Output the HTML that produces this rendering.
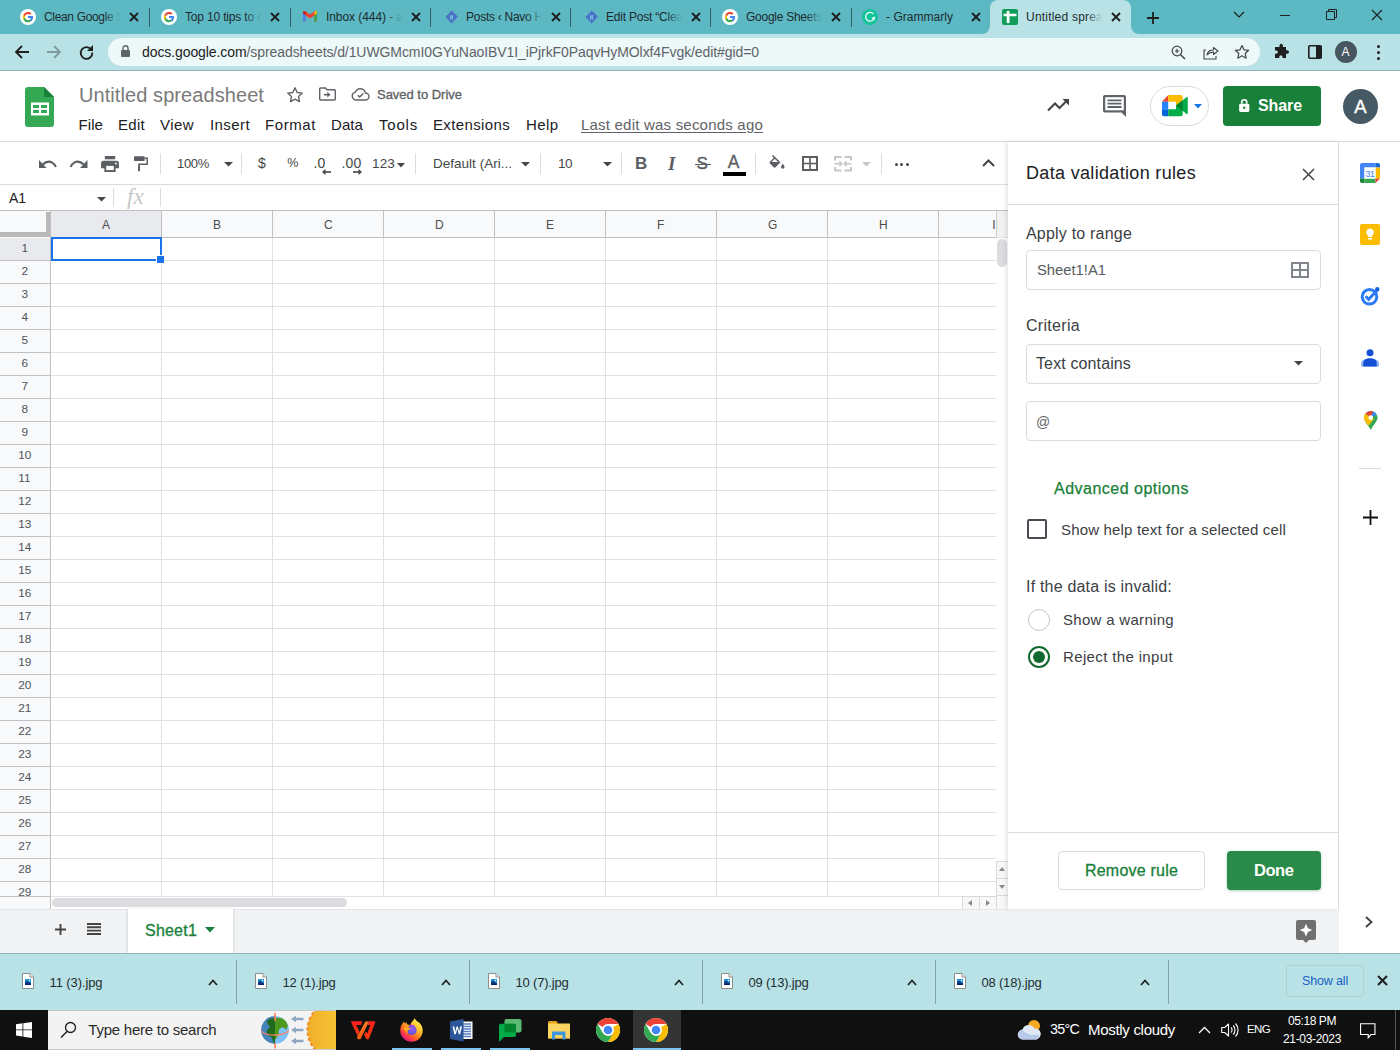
<!DOCTYPE html>
<html lang="en"><head><meta charset="utf-8"><title>Untitled spreadsheet - Google Sheets</title>
<style>
html,body{margin:0;padding:0;}
body{width:1400px;height:1050px;overflow:hidden;position:relative;background:#fff;font-family:"Liberation Sans",sans-serif;}
.a{position:absolute;}
.t{position:absolute;white-space:nowrap;font-family:"Liberation Sans",sans-serif;}
svg{position:absolute;overflow:visible;}
.box{position:absolute;box-sizing:border-box;}
</style></head><body>
<div class="a" style="left:0;top:0;width:1400px;height:34px;background:#5cb8c3"></div>
<div class="a" style="left:0;top:34px;width:1400px;height:36px;background:#b9e2e6"></div>
<div class="a" style="left:0;top:70px;width:1400px;height:1px;background:#8fb5ba"></div>
<div class="a" style="left:990px;top:0;width:141px;height:34px;background:#b9e2e6;border-radius:8px 8px 0 0"></div>
<svg style="left:982px;top:26px" width="8" height="8"><path d="M8 0V8H0A8 8 0 0 0 8 0Z" fill="#b9e2e6"/></svg>
<svg style="left:1131px;top:26px" width="8" height="8"><path d="M0 0V8H8A8 8 0 0 1 0 0Z" fill="#b9e2e6"/></svg>
<div class="a" style="left:149px;top:8px;width:1px;height:19px;background:#2f5f66"></div>
<div class="a" style="left:290px;top:8px;width:1px;height:19px;background:#2f5f66"></div>
<div class="a" style="left:430px;top:8px;width:1px;height:19px;background:#2f5f66"></div>
<div class="a" style="left:570px;top:8px;width:1px;height:19px;background:#2f5f66"></div>
<div class="a" style="left:710px;top:8px;width:1px;height:19px;background:#2f5f66"></div>
<div class="a" style="left:851px;top:8px;width:1px;height:19px;background:#2f5f66"></div>
<svg style="left:20px;top:9px" width="16" height="16" viewBox="0 0 16 16"><circle cx="8" cy="8" r="8" fill="#fff"/><path d="M13 8.1c0-.35-.03-.7-.1-1H8v2h2.8a2.4 2.4 0 0 1-1 1.6v1.3h1.7C12.4 11.1 13 9.7 13 8.1z" fill="#4285f4"/><path d="M8 13.2c1.4 0 2.6-.5 3.4-1.2l-1.7-1.3c-.5.3-1 .5-1.7.5-1.300 0-2.500-.9-2.900-2.100H3.400v1.300A5.200 5.200 0 0 0 8 13.200z" fill="#34a853"/><path d="M5.100 9.100a3.100 3.100 0 0 1 0-2V5.800H3.400a5.200 5.200 0 0 0 0 4.600z" fill="#fbbc05"/><path d="M8 4.900c.8 0 1.400.3 2 .8l1.500-1.500A5.200 5.200 0 0 0 3.400 5.800l1.700 1.300C5.500 5.800 6.700 4.900 8 4.900z" fill="#ea4335"/></svg>
<svg style="left:129.5px;top:13px" width="8" height="8"><path d="M0 0L8 8M8 0L0 8" stroke="#1f1f1f" stroke-width="1.9" fill="none"/></svg>
<div class="a" style="left:104px;top:6px;width:22px;height:22px;background:linear-gradient(90deg,rgba(92,184,195,0),rgba(92,184,195,1) 75%);z-index:5"></div>
<svg style="left:161px;top:9px" width="16" height="16" viewBox="0 0 16 16"><circle cx="8" cy="8" r="8" fill="#fff"/><path d="M13 8.1c0-.35-.03-.7-.1-1H8v2h2.8a2.4 2.4 0 0 1-1 1.6v1.3h1.7C12.4 11.1 13 9.7 13 8.1z" fill="#4285f4"/><path d="M8 13.2c1.4 0 2.6-.5 3.4-1.2l-1.7-1.3c-.5.3-1 .5-1.7.5-1.300 0-2.500-.9-2.900-2.100H3.400v1.300A5.200 5.200 0 0 0 8 13.200z" fill="#34a853"/><path d="M5.100 9.100a3.100 3.100 0 0 1 0-2V5.800H3.400a5.200 5.200 0 0 0 0 4.600z" fill="#fbbc05"/><path d="M8 4.900c.8 0 1.400.3 2 .8l1.500-1.500A5.200 5.200 0 0 0 3.400 5.800l1.700 1.300C5.500 5.800 6.700 4.900 8 4.900z" fill="#ea4335"/></svg>
<svg style="left:270.5px;top:13px" width="8" height="8"><path d="M0 0L8 8M8 0L0 8" stroke="#1f1f1f" stroke-width="1.9" fill="none"/></svg>
<div class="a" style="left:245px;top:6px;width:22px;height:22px;background:linear-gradient(90deg,rgba(92,184,195,0),rgba(92,184,195,1) 75%);z-index:5"></div>
<svg style="left:303px;top:11.400px" width="14" height="10.600" viewBox="0 0 16 12"><path d="M0 1.500V12h3V5L8 8.500 13 5v7h3V1.500L13.500 0 8 4 2.500 0z" fill="#ea4335"/><path d="M0 2v10h3V4.500z" fill="#4285f4"/><path d="M16 2v10h-3V4.500z" fill="#34a853"/><path d="M13 1v4l3-2.200V1.500C16 .2 14.600-.3 13.600.4z" fill="#fbbc04"/><path d="M3 1v4L0 2.800V1.500C0 .2 1.400-.3 2.400.4z" fill="#c5221f"/></svg>
<svg style="left:411.5px;top:13px" width="8" height="8"><path d="M0 0L8 8M8 0L0 8" stroke="#1f1f1f" stroke-width="1.9" fill="none"/></svg>
<div class="a" style="left:386px;top:6px;width:22px;height:22px;background:linear-gradient(90deg,rgba(92,184,195,0),rgba(92,184,195,1) 75%);z-index:5"></div>
<svg style="left:443px;top:9px" width="16" height="16" viewBox="0 0 16 16"><path d="M8.700 2.300L14 7.600 8.700 13.600 3.400 8z" fill="#4b70c9" stroke="#4b70c9" stroke-width="1.200" stroke-linejoin="round"/><path d="M7.600 10.800V6.300l2 4.200V6" stroke="#74c4d2" stroke-width="1" fill="none"/><circle cx="2.500" cy="5" r="1.300" fill="#7cc8d6" opacity=".45"/></svg>
<svg style="left:551.5px;top:13px" width="8" height="8"><path d="M0 0L8 8M8 0L0 8" stroke="#1f1f1f" stroke-width="1.9" fill="none"/></svg>
<div class="a" style="left:526px;top:6px;width:22px;height:22px;background:linear-gradient(90deg,rgba(92,184,195,0),rgba(92,184,195,1) 75%);z-index:5"></div>
<svg style="left:583px;top:9px" width="16" height="16" viewBox="0 0 16 16"><path d="M8.700 2.300L14 7.600 8.700 13.600 3.400 8z" fill="#4b70c9" stroke="#4b70c9" stroke-width="1.200" stroke-linejoin="round"/><path d="M7.600 10.800V6.300l2 4.200V6" stroke="#74c4d2" stroke-width="1" fill="none"/><circle cx="2.500" cy="5" r="1.300" fill="#7cc8d6" opacity=".45"/></svg>
<svg style="left:691.5px;top:13px" width="8" height="8"><path d="M0 0L8 8M8 0L0 8" stroke="#1f1f1f" stroke-width="1.9" fill="none"/></svg>
<div class="a" style="left:666px;top:6px;width:22px;height:22px;background:linear-gradient(90deg,rgba(92,184,195,0),rgba(92,184,195,1) 75%);z-index:5"></div>
<svg style="left:722px;top:9px" width="16" height="16" viewBox="0 0 16 16"><circle cx="8" cy="8" r="8" fill="#fff"/><path d="M13 8.1c0-.35-.03-.7-.1-1H8v2h2.8a2.4 2.4 0 0 1-1 1.6v1.3h1.7C12.4 11.1 13 9.7 13 8.1z" fill="#4285f4"/><path d="M8 13.2c1.4 0 2.6-.5 3.4-1.2l-1.7-1.3c-.5.3-1 .5-1.7.5-1.300 0-2.500-.9-2.900-2.100H3.400v1.300A5.200 5.200 0 0 0 8 13.200z" fill="#34a853"/><path d="M5.100 9.100a3.100 3.100 0 0 1 0-2V5.800H3.400a5.200 5.200 0 0 0 0 4.600z" fill="#fbbc05"/><path d="M8 4.900c.8 0 1.400.3 2 .8l1.500-1.500A5.200 5.200 0 0 0 3.400 5.800l1.700 1.300C5.500 5.800 6.700 4.900 8 4.900z" fill="#ea4335"/></svg>
<svg style="left:831.5px;top:13px" width="8" height="8"><path d="M0 0L8 8M8 0L0 8" stroke="#1f1f1f" stroke-width="1.9" fill="none"/></svg>
<div class="a" style="left:806px;top:6px;width:22px;height:22px;background:linear-gradient(90deg,rgba(92,184,195,0),rgba(92,184,195,1) 75%);z-index:5"></div>
<svg style="left:862px;top:9px" width="16" height="16" viewBox="0 0 16 16"><circle cx="8" cy="8" r="8" fill="#15c39a"/><path d="M11.300 4.800A4.400 4.400 0 1 0 12.300 9H9.800" stroke="#fff" stroke-width="1.200" fill="none"/><path d="M12.800 7.300v3.400l-2.600-1.200z" fill="#fff"/></svg>
<svg style="left:971.5px;top:13px" width="8" height="8"><path d="M0 0L8 8M8 0L0 8" stroke="#1f1f1f" stroke-width="1.9" fill="none"/></svg>
<svg style="left:1002px;top:9px" width="16" height="16" viewBox="0 0 16 16"><rect width="16" height="16" rx="2" fill="#0f9d58"/><path d="M4.700 2h2.800v2.700h7v2.600h-7V14H4.700V7.300H1.500V4.700h3.200z" fill="#fff"/></svg>
<svg style="left:1111.5px;top:13px" width="8" height="8"><path d="M0 0L8 8M8 0L0 8" stroke="#1f1f1f" stroke-width="1.9" fill="none"/></svg>
<div class="a" style="left:1086px;top:6px;width:22px;height:22px;background:linear-gradient(90deg,rgba(185,226,230,0),rgba(185,226,230,1) 75%);z-index:5"></div>
<svg style="left:1147px;top:11.500px" width="12" height="12"><path d="M6 0V12M0 6H12" stroke="#1f1f1f" stroke-width="1.800"/></svg>
<svg style="left:1233px;top:11px" width="12" height="8"><path d="M1 1L6 6 11 1" stroke="#1f1f1f" stroke-width="1.200" fill="none"/></svg>
<div class="a" style="left:1280px;top:14.500px;width:10px;height:1px;background:#1f1f1f"></div>
<svg style="left:1326px;top:9px" width="11" height="11"><path d="M.500 2.500h8v8h-8zM2.500 2.500v-2h8v8h-2" stroke="#1f1f1f" stroke-width="1" fill="none"/></svg>
<svg style="left:1372px;top:10px" width="10" height="10"><path d="M0 0L10 10M10 0L0 10" stroke="#1f1f1f" stroke-width="1.1" fill="none"/></svg>
<svg style="left:15px;top:45px" width="14" height="14"><path d="M14 7H1.500M7 1L1 7l6 6" stroke="#1f1f1f" stroke-width="1.800" fill="none"/></svg>
<svg style="left:47px;top:45px" width="14" height="14"><path d="M0 7h12.500M7 1l6 6-6 6" stroke="#7e9a9e" stroke-width="1.800" fill="none"/></svg>
<svg style="left:79px;top:45px" width="15" height="15" viewBox="0 0 15 15"><path d="M12.500 5A5.800 5.800 0 1 0 13.300 7.500" stroke="#1f1f1f" stroke-width="1.800" fill="none"/><path d="M14 0v6H8z" fill="#1f1f1f"/></svg>
<div class="a" style="left:108px;top:38px;width:1152px;height:28px;border-radius:14px;background:#edf8f9"></div>
<svg style="left:121px;top:45px" width="9" height="12" viewBox="0 0 9 12"><rect x="0" y="5" width="9" height="7" rx="1" fill="#5f6368"/><path d="M2 5V3.200a2.500 2.500 0 0 1 5 0V5" stroke="#5f6368" stroke-width="1.400" fill="none"/></svg>
<svg style="left:1171px;top:45px" width="15" height="15" viewBox="0 0 15 15"><circle cx="6" cy="6" r="4.800" stroke="#444" stroke-width="1.200" fill="none"/><path d="M9.500 9.500L14 14" stroke="#444" stroke-width="1.500"/><path d="M6 3.800v4.400M3.800 6h4.400" stroke="#444" stroke-width="1.100"/></svg>
<svg style="left:1202.500px;top:44.500px" width="16" height="15" viewBox="0 0 16 15"><path d="M3 5H1v9h12v-3" stroke="#444" stroke-width="1.100" fill="none"/><path d="M4 10c.500-3.500 3-5 6.500-5V2.500L15 6l-4.500 3.500V7C8 7 6 7.800 4 10z" stroke="#444" stroke-width="1.100" fill="none" stroke-linejoin="round"/></svg>
<svg style="left:1234px;top:44px" width="16" height="16" viewBox="0 0 16 16"><path d="M8 1.500l2 4.300 4.700.5-3.500 3.200 1 4.700L8 11.800 3.800 14.200l1-4.700L1.300 6.300 6 5.800z" stroke="#444" stroke-width="1.200" fill="none" stroke-linejoin="round"/></svg>
<svg style="left:1273px;top:44px" width="16" height="16" viewBox="0 0 16 16"><path d="M6.500 1.500a1.700 1.700 0 0 1 3.400 0V3H13v3.300h1.300a1.700 1.700 0 0 1 0 3.400H13V14H9.500v-1.200a1.600 1.600 0 0 0-3.200 0V14H2V9.800h1.200a1.700 1.700 0 0 0 0-3.400H2V3h4.500z" fill="#1f1f1f"/></svg>
<svg style="left:1307.500px;top:45px" width="14" height="14" viewBox="0 0 14 14"><rect x=".8" y=".8" width="12.400" height="12.400" rx="1" stroke="#1f1f1f" stroke-width="1.600" fill="none"/><rect x="8" y="1" width="5.500" height="12" fill="#1f1f1f"/></svg>
<div class="a" style="left:1335px;top:41px;width:22px;height:22px;border-radius:11px;background:#47565f"></div>
<div class="a" style="left:1376.500px;top:44.5px;width:3px;height:3px;border-radius:2px;background:#1f1f1f"></div>
<div class="a" style="left:1376.500px;top:50.5px;width:3px;height:3px;border-radius:2px;background:#1f1f1f"></div>
<div class="a" style="left:1376.500px;top:56.5px;width:3px;height:3px;border-radius:2px;background:#1f1f1f"></div>
<svg style="left:25px;top:87px" width="29" height="40" viewBox="0 0 29 40"><path d="M3 0h16l10 10v27a3 3 0 0 1-3 3H3a3 3 0 0 1-3-3V3a3 3 0 0 1 3-3z" fill="#34a853"/><path d="M19 0l10 10H19z" fill="#188038"/><path d="M6 15.500h18v13H6zM8 18v3h6v-3zm8 0v3h6v-3zM8 23v3h6v-3zm8 0v3h6v-3z" fill="#fff" fill-rule="evenodd"/></svg>
<svg style="left:285.700px;top:85.600px" width="18" height="18" viewBox="0 0 18 18"><path d="M9 1.800l2.200 4.700 5.100.6-3.800 3.500 1 5L9 13.100 4.500 15.600l1-5L1.700 7.100l5.100-.6z" stroke="#5f6368" stroke-width="1.400" fill="none" stroke-linejoin="round"/></svg>
<svg style="left:319px;top:87px" width="17" height="14" viewBox="0 0 17 14"><path d="M1.500 1h5l1.500 1.800h7.500a.8.8 0 0 1 .8.800v8.600a.8.800 0 0 1-.8.800h-14a.8.800 0 0 1-.8-.8V1.800a.8.800 0 0 1 .8-.8z" stroke="#5f6368" stroke-width="1.400" fill="none"/><path d="M5 7.700h4" stroke="#5f6368" stroke-width="1.600" fill="none"/><path d="M8.300 4.800l3.200 2.900-3.200 2.900z" fill="#5f6368"/></svg>
<svg style="left:351px;top:87px" width="19" height="14" viewBox="0 0 19 14"><path d="M5 13a4 4 0 0 1-.6-7.900 5.200 5.200 0 0 1 10 .9A3.500 3.500 0 0 1 14.500 13z" stroke="#5f6368" stroke-width="1.400" fill="none"/><path d="M6.800 8.200l1.900 1.900 3.600-3.600" stroke="#5f6368" stroke-width="1.400" fill="none"/></svg>
<svg style="left:1047px;top:98px" width="23" height="14" viewBox="0 0 23 14"><path d="M1 12.500l7-7 4.500 4.500L20.500 2" stroke="#444" stroke-width="2" fill="none"/><path d="M15.500 1H22v6.500z" fill="#444"/></svg>
<svg style="left:1103px;top:95px" width="23" height="22" viewBox="0 0 23 22"><path d="M2 0h19a2 2 0 0 1 2 2v20l-4.500-4.500H2a2 2 0 0 1-2-2V2a2 2 0 0 1 2-2z" fill="#5f6368"/><path d="M2.200 2.200h18.600v13.100H2.200z" fill="#fff"/><path d="M4.500 4.500h14v1.800h-14zM4.500 7.800h14v1.800h-14zM4.500 11.100h14v1.800h-14z" fill="#5f6368"/></svg>
<div class="box" style="left:1150px;top:86px;width:59px;height:39.500px;border-radius:20px;border:1px solid #dadce0;background:#fff"></div>
<svg style="left:1162px;top:95px" width="26" height="21.250" viewBox="0 0 26 21.250"><path d="M0 6.750L6.250 0v6.750z" fill="#ea4335"/><path d="M6.250 0H18.700a2 2 0 0 1 2 2v4L14 10.500V6.750H6.250z" fill="#fbbc04"/><path d="M0 6.750h6.250v7.500H0z" fill="#2684fc"/><path d="M0 14.250h6.250v7H2a2 2 0 0 1-2-2z" fill="#0066da"/><path d="M6.250 14.250H14V10.500l6.700 5v3.750a2 2 0 0 1-2 2H6.250z" fill="#00ac47"/><path d="M14 10.500l10.500-8.300c.5-.4 1.250 0 1.250.6v15.600c0 .6-.75 1-1.250.6z" fill="#00ac47"/><path d="M14 10.500l6.700-5.300v10.500z" fill="#00832d"/></svg>
<svg style="left:1194px;top:104px" width="8" height="4.500"><path d="M0 0h8L4 4.500z" fill="#1a73e8"/></svg>
<div class="a" style="left:1223px;top:86px;width:98px;height:40px;border-radius:4px;background:#188038"></div>
<svg style="left:1238.500px;top:98.700px" width="10.500" height="13" viewBox="0 0 11 14"><rect x="0" y="5" width="11" height="9" rx="1.500" fill="#fff"/><path d="M2.800 5V3.500a2.700 2.700 0 0 1 5.400 0V5" stroke="#fff" stroke-width="1.700" fill="none"/><circle cx="5.500" cy="9.500" r="1.300" fill="#188038"/></svg>
<div class="a" style="left:1343px;top:88.500px;width:35px;height:35px;border-radius:18px;background:#455a64"></div>
<div class="a" style="left:0;top:141px;width:1400px;height:1px;background:#dadce0"></div>
<svg style="left:39px;top:159.600px" width="17.500" height="8" viewBox="0 0 17.500 8"><path d="M0 0V8H7.500z" fill="#5b5e62"/><path d="M3.800 4.600C6.500 1.800 10.300 1 13.200 2.600c1.800 1 3 2.600 3.600 4.400" stroke="#5b5e62" stroke-width="2.100" fill="none"/></svg>
<svg style="left:69.800px;top:159.600px" width="17.500" height="8" viewBox="0 0 17.500 8"><path d="M17.500 0V8H10z" fill="#5b5e62"/><path d="M13.700 4.600C11 1.800 7.200 1 4.300 2.600 2.500 3.600 1.300 5.200 .7 7" stroke="#5b5e62" stroke-width="2.100" fill="none"/></svg>
<svg style="left:101px;top:156px" width="18" height="16" viewBox="0 0 19 17"><path d="M4 0h11v3.500H4z" fill="#5b5e62"/><path d="M2.500 5h14A2.500 2.500 0 0 1 19 7.500V13h-3.500v4h-12v-4H0V7.500A2.500 2.500 0 0 1 2.500 5z" fill="#5b5e62"/><path d="M5.500 10.500h8V15h-8z" fill="#fff"/><circle cx="15.800" cy="8" r="1" fill="#fff"/></svg>
<svg style="left:134px;top:156px" width="14" height="15.500" viewBox="0 0 14 15.500"><rect x="0" y=".2" width="10.700" height="4.800" rx=".7" fill="#5b5e62"/><path d="M10.700 2.200H13.200V8.200H5V10" stroke="#5b5e62" stroke-width="1.500" fill="none"/><rect x="4.100" y="9.300" width="1.900" height="6" fill="#5b5e62"/></svg>
<div class="a" style="left:160px;top:153px;width:1px;height:21px;background:#dadce0"></div>
<div class="a" style="left:241px;top:153px;width:1px;height:21px;background:#dadce0"></div>
<div class="a" style="left:415px;top:153px;width:1px;height:21px;background:#dadce0"></div>
<div class="a" style="left:540px;top:153px;width:1px;height:21px;background:#dadce0"></div>
<div class="a" style="left:621px;top:153px;width:1px;height:21px;background:#dadce0"></div>
<div class="a" style="left:755px;top:153px;width:1px;height:21px;background:#dadce0"></div>
<div class="a" style="left:881px;top:153px;width:1px;height:21px;background:#dadce0"></div>
<svg style="left:223.5px;top:162px" width="9" height="5"><path d="M0 0h9L4.5 4.500z" fill="#444746"/></svg>
<svg style="left:322px;top:168.500px" width="9" height="6"><path d="M9 3H2" stroke="#444746" stroke-width="1.600"/><path d="M0 3l3.500-3v6z" fill="#444746"/></svg>
<svg style="left:353px;top:168.500px" width="9" height="6"><path d="M0 3h7" stroke="#444746" stroke-width="1.600"/><path d="M9 3l-3.500-3v6z" fill="#444746"/></svg>
<svg style="left:397.0px;top:162.5px" width="8" height="5"><path d="M0 0h8L4.0 4.500z" fill="#444746"/></svg>
<svg style="left:520.5px;top:162px" width="9" height="5"><path d="M0 0h9L4.5 4.500z" fill="#444746"/></svg>
<svg style="left:602.5px;top:162px" width="9" height="5"><path d="M0 0h9L4.5 4.500z" fill="#444746"/></svg>
<div class="a" style="left:695px;top:163.500px;width:16px;height:1.600px;background:#5b5e62"></div>
<div class="a" style="left:723px;top:172px;width:23px;height:4px;background:#000"></div>
<svg style="left:768.500px;top:155px" width="17" height="15" viewBox="0 0 19 17"><path d="M3.200 1.200L4.500 0l8.300 8.300-5.500 5.500a1.500 1.500 0 0 1-2.100 0L1 9.600a1.500 1.500 0 0 1 0-2.100l4.300-4.300zM6.300 4.300L2.700 8h7.400z" fill="#5b5e62" fill-rule="evenodd"/><path d="M15.500 10s2 2.300 2 3.500a2 2 0 0 1-4 0c0-1.200 2-3.500 2-3.500z" fill="#5b5e62"/></svg>
<svg style="left:802px;top:156px" width="16" height="15" viewBox="0 0 16 15"><path d="M1 1h14v13H1z" stroke="#5b5e62" stroke-width="2" fill="none"/><path d="M8 1v13M1 7.500h14" stroke="#5b5e62" stroke-width="1.600" fill="none"/></svg>
<svg style="left:834px;top:156.300px" width="18" height="15.500" viewBox="0 0 18 15.500"><path d="M1 4.500V1H7.500M10.500 1H17V4.500M1 11v3.500H7.500M10.500 14.500H17V11" stroke="#c4c7c5" stroke-width="2" fill="none"/><path d="M.5 7.750H6.500M17.500 7.750H11.500" stroke="#c4c7c5" stroke-width="1.700"/><path d="M5.300 5.400l2.500 2.350-2.500 2.350M12.700 5.400l-2.500 2.350 2.500 2.350" stroke="#c4c7c5" stroke-width="1.500" fill="none"/></svg>
<svg style="left:862.3px;top:162.3px" width="9" height="5"><path d="M0 0h9L4.5 4.500z" fill="#c4c7c5"/></svg>
<div class="a" style="left:894.7px;top:162.500px;width:3px;height:3px;border-radius:2px;background:#444746"></div>
<div class="a" style="left:900.2px;top:162.500px;width:3px;height:3px;border-radius:2px;background:#444746"></div>
<div class="a" style="left:905.7px;top:162.500px;width:3px;height:3px;border-radius:2px;background:#444746"></div>
<svg style="left:982px;top:159px" width="13" height="8"><path d="M1 7l5.500-5.500L12 7" stroke="#444746" stroke-width="2" fill="none"/></svg>
<div class="a" style="left:0;top:184px;width:1008px;height:1px;background:#dadce0"></div>
<svg style="left:96.5px;top:197px" width="9" height="5"><path d="M0 0h9L4.5 4.500z" fill="#444746"/></svg>
<div class="a" style="left:113px;top:188px;width:1px;height:19px;background:#dadce0"></div>
<div class="a" style="left:160px;top:188px;width:1px;height:19px;background:#dadce0"></div>
<div class="a" style="left:0;top:210px;width:1008px;height:1px;background:#c0c0c0"></div>
<div class="a" style="left:0;top:211px;width:996px;height:26px;background:#f8f9fa"></div>
<div class="a" style="left:0;top:237px;width:50px;height:660px;background:#f8f9fa"></div>
<div class="a" style="left:51px;top:211px;width:110px;height:26px;background:#e8eaed"></div>
<div class="a" style="left:0;top:238px;width:50px;height:22px;background:#e8eaed"></div>
<div class="a" style="left:46px;top:212px;width:5px;height:25px;background:#b9b9b9"></div>
<div class="a" style="left:0;top:232px;width:51px;height:5px;background:#b9b9b9"></div>
<div class="a" style="left:50px;top:211px;width:1px;height:26px;background:#c0c0c0"></div>
<div class="a" style="left:50px;top:237px;width:1px;height:660px;background:#c0c0c0"></div>
<div class="a" style="left:161px;top:211px;width:1px;height:26px;background:#c0c0c0"></div>
<div class="a" style="left:161px;top:237px;width:1px;height:660px;background:#e1e1e1"></div>
<div class="a" style="left:272px;top:211px;width:1px;height:26px;background:#c0c0c0"></div>
<div class="a" style="left:272px;top:237px;width:1px;height:660px;background:#e1e1e1"></div>
<div class="a" style="left:383px;top:211px;width:1px;height:26px;background:#c0c0c0"></div>
<div class="a" style="left:383px;top:237px;width:1px;height:660px;background:#e1e1e1"></div>
<div class="a" style="left:494px;top:211px;width:1px;height:26px;background:#c0c0c0"></div>
<div class="a" style="left:494px;top:237px;width:1px;height:660px;background:#e1e1e1"></div>
<div class="a" style="left:605px;top:211px;width:1px;height:26px;background:#c0c0c0"></div>
<div class="a" style="left:605px;top:237px;width:1px;height:660px;background:#e1e1e1"></div>
<div class="a" style="left:716px;top:211px;width:1px;height:26px;background:#c0c0c0"></div>
<div class="a" style="left:716px;top:237px;width:1px;height:660px;background:#e1e1e1"></div>
<div class="a" style="left:827px;top:211px;width:1px;height:26px;background:#c0c0c0"></div>
<div class="a" style="left:827px;top:237px;width:1px;height:660px;background:#e1e1e1"></div>
<div class="a" style="left:938px;top:211px;width:1px;height:26px;background:#c0c0c0"></div>
<div class="a" style="left:938px;top:237px;width:1px;height:660px;background:#e1e1e1"></div>
<div class="a" style="left:51px;top:237px;width:945px;height:1px;background:#c0c0c0"></div>
<div class="a" style="left:0;top:260px;width:50px;height:1px;background:#c0c0c0"></div>
<div class="a" style="left:51px;top:260px;width:945px;height:1px;background:#e1e1e1"></div>
<div class="a" style="left:0;top:283px;width:50px;height:1px;background:#c0c0c0"></div>
<div class="a" style="left:51px;top:283px;width:945px;height:1px;background:#e1e1e1"></div>
<div class="a" style="left:0;top:306px;width:50px;height:1px;background:#c0c0c0"></div>
<div class="a" style="left:51px;top:306px;width:945px;height:1px;background:#e1e1e1"></div>
<div class="a" style="left:0;top:329px;width:50px;height:1px;background:#c0c0c0"></div>
<div class="a" style="left:51px;top:329px;width:945px;height:1px;background:#e1e1e1"></div>
<div class="a" style="left:0;top:352px;width:50px;height:1px;background:#c0c0c0"></div>
<div class="a" style="left:51px;top:352px;width:945px;height:1px;background:#e1e1e1"></div>
<div class="a" style="left:0;top:375px;width:50px;height:1px;background:#c0c0c0"></div>
<div class="a" style="left:51px;top:375px;width:945px;height:1px;background:#e1e1e1"></div>
<div class="a" style="left:0;top:398px;width:50px;height:1px;background:#c0c0c0"></div>
<div class="a" style="left:51px;top:398px;width:945px;height:1px;background:#e1e1e1"></div>
<div class="a" style="left:0;top:421px;width:50px;height:1px;background:#c0c0c0"></div>
<div class="a" style="left:51px;top:421px;width:945px;height:1px;background:#e1e1e1"></div>
<div class="a" style="left:0;top:444px;width:50px;height:1px;background:#c0c0c0"></div>
<div class="a" style="left:51px;top:444px;width:945px;height:1px;background:#e1e1e1"></div>
<div class="a" style="left:0;top:467px;width:50px;height:1px;background:#c0c0c0"></div>
<div class="a" style="left:51px;top:467px;width:945px;height:1px;background:#e1e1e1"></div>
<div class="a" style="left:0;top:490px;width:50px;height:1px;background:#c0c0c0"></div>
<div class="a" style="left:51px;top:490px;width:945px;height:1px;background:#e1e1e1"></div>
<div class="a" style="left:0;top:513px;width:50px;height:1px;background:#c0c0c0"></div>
<div class="a" style="left:51px;top:513px;width:945px;height:1px;background:#e1e1e1"></div>
<div class="a" style="left:0;top:536px;width:50px;height:1px;background:#c0c0c0"></div>
<div class="a" style="left:51px;top:536px;width:945px;height:1px;background:#e1e1e1"></div>
<div class="a" style="left:0;top:559px;width:50px;height:1px;background:#c0c0c0"></div>
<div class="a" style="left:51px;top:559px;width:945px;height:1px;background:#e1e1e1"></div>
<div class="a" style="left:0;top:582px;width:50px;height:1px;background:#c0c0c0"></div>
<div class="a" style="left:51px;top:582px;width:945px;height:1px;background:#e1e1e1"></div>
<div class="a" style="left:0;top:605px;width:50px;height:1px;background:#c0c0c0"></div>
<div class="a" style="left:51px;top:605px;width:945px;height:1px;background:#e1e1e1"></div>
<div class="a" style="left:0;top:628px;width:50px;height:1px;background:#c0c0c0"></div>
<div class="a" style="left:51px;top:628px;width:945px;height:1px;background:#e1e1e1"></div>
<div class="a" style="left:0;top:651px;width:50px;height:1px;background:#c0c0c0"></div>
<div class="a" style="left:51px;top:651px;width:945px;height:1px;background:#e1e1e1"></div>
<div class="a" style="left:0;top:674px;width:50px;height:1px;background:#c0c0c0"></div>
<div class="a" style="left:51px;top:674px;width:945px;height:1px;background:#e1e1e1"></div>
<div class="a" style="left:0;top:697px;width:50px;height:1px;background:#c0c0c0"></div>
<div class="a" style="left:51px;top:697px;width:945px;height:1px;background:#e1e1e1"></div>
<div class="a" style="left:0;top:720px;width:50px;height:1px;background:#c0c0c0"></div>
<div class="a" style="left:51px;top:720px;width:945px;height:1px;background:#e1e1e1"></div>
<div class="a" style="left:0;top:743px;width:50px;height:1px;background:#c0c0c0"></div>
<div class="a" style="left:51px;top:743px;width:945px;height:1px;background:#e1e1e1"></div>
<div class="a" style="left:0;top:766px;width:50px;height:1px;background:#c0c0c0"></div>
<div class="a" style="left:51px;top:766px;width:945px;height:1px;background:#e1e1e1"></div>
<div class="a" style="left:0;top:789px;width:50px;height:1px;background:#c0c0c0"></div>
<div class="a" style="left:51px;top:789px;width:945px;height:1px;background:#e1e1e1"></div>
<div class="a" style="left:0;top:812px;width:50px;height:1px;background:#c0c0c0"></div>
<div class="a" style="left:51px;top:812px;width:945px;height:1px;background:#e1e1e1"></div>
<div class="a" style="left:0;top:835px;width:50px;height:1px;background:#c0c0c0"></div>
<div class="a" style="left:51px;top:835px;width:945px;height:1px;background:#e1e1e1"></div>
<div class="a" style="left:0;top:858px;width:50px;height:1px;background:#c0c0c0"></div>
<div class="a" style="left:51px;top:858px;width:945px;height:1px;background:#e1e1e1"></div>
<div class="a" style="left:0;top:881px;width:50px;height:1px;background:#c0c0c0"></div>
<div class="a" style="left:51px;top:881px;width:945px;height:1px;background:#e1e1e1"></div>
<div class="box" style="left:51px;top:237px;width:111px;height:24px;border:2px solid #1a73e8"></div>
<div class="box" style="left:156px;top:255px;width:8px;height:8px;background:#1a73e8;border:1px solid #fff;border-right:0;border-bottom:0"></div>
<div class="a" style="left:996px;top:211px;width:12px;height:698px;background:#fff"></div>
<div class="a" style="left:997px;top:211px;width:11px;height:26px;background:#f1f1f1"></div>
<div class="a" style="left:996px;top:211px;width:1px;height:27px;background:#cfcfcf"></div>
<div class="a" style="left:996px;top:237px;width:12px;height:1px;background:#e4e4e4"></div>
<div class="a" style="left:997px;top:239px;width:10px;height:28px;border-radius:5px;background:#dadce0"></div>
<div class="box" style="left:996px;top:861px;width:12px;height:48px;background:#f8f8f8;border-left:1px solid #d9d9d9;border-top:1px solid #d9d9d9"></div>
<div class="a" style="left:996px;top:878px;width:12px;height:1px;background:#d9d9d9"></div>
<div class="a" style="left:996px;top:895px;width:12px;height:1px;background:#d9d9d9"></div>
<svg style="left:999px;top:867px" width="6" height="4"><path d="M0 4h6L3 0z" fill="#8a8a8a"/></svg>
<svg style="left:999px;top:885px" width="6" height="4"><path d="M0 0h6L3 4z" fill="#8a8a8a"/></svg>
<div class="a" style="left:0;top:896px;width:996px;height:13px;background:#fff"></div>
<div class="a" style="left:0;top:896px;width:996px;height:1px;background:#e0e0e0"></div>
<div class="a" style="left:0;top:897px;width:50px;height:12px;background:#f8f9fa"></div>
<div class="a" style="left:0;top:896px;width:50px;height:1px;background:#c0c0c0"></div>
<div class="a" style="left:50px;top:896px;width:1px;height:13px;background:#c0c0c0"></div>
<div class="a" style="left:52px;top:898px;width:295px;height:9px;border-radius:5px;background:#dadce0"></div>
<div class="box" style="left:962px;top:896px;width:34px;height:13px;background:#f8f8f8;border-left:1px solid #d9d9d9;border-top:1px solid #d9d9d9"></div>
<div class="a" style="left:979px;top:896px;width:1px;height:13px;background:#d9d9d9"></div>
<svg style="left:968px;top:900px" width="4" height="6"><path d="M4 0v6L0 3z" fill="#8a8a8a"/></svg>
<svg style="left:986px;top:900px" width="4" height="6"><path d="M0 0v6L4 3z" fill="#8a8a8a"/></svg>
<div class="a" style="left:0;top:909px;width:1339px;height:44px;background:#f1f3f4"></div>
<div class="a" style="left:0;top:909px;width:1008px;height:1px;background:#e3e5e8"></div>
<svg style="left:54.500px;top:923.500px" width="11" height="11"><path d="M5.500 0v11M0 5.500h11" stroke="#444" stroke-width="1.900"/></svg>
<svg style="left:87px;top:923px" width="14" height="12"><path d="M0 1h14M0 4.300h14M0 7.600h14M0 11h14" stroke="#444" stroke-width="1.900"/></svg>
<div class="a" style="left:127.500px;top:909px;width:105px;height:44px;background:#fff;box-shadow:0 1px 3px rgba(60,64,67,.25)"></div>
<svg style="left:205px;top:927px" width="10" height="6"><path d="M0 0h10L5 5.500z" fill="#188038"/></svg>
<svg style="left:1296px;top:920px" width="20" height="23" viewBox="0 0 20 23"><path d="M2 0h16a2 2 0 0 1 2 2v16a2 2 0 0 1-2 2h-5L10 23 7 20H2a2 2 0 0 1-2-2V2a2 2 0 0 1 2-2z" fill="#707070"/><path d="M10 3.800l1.900 4.400 4.400 1.900-4.400 1.900L10 16.400 8.100 12 3.700 10.100 8.100 8.200z" fill="#fff"/></svg>
<div class="a" style="left:1008px;top:142px;width:330px;height:767px;background:#fff;box-shadow:-2px 0 4px rgba(60,64,67,.13)"></div>
<div class="a" style="left:1338px;top:142px;width:1px;height:767px;background:#dadce0"></div>
<div class="a" style="left:1339px;top:142px;width:61px;height:811px;background:#fff"></div>
<div class="a" style="left:1338px;top:142px;width:1px;height:767px;background:#dadce0"></div>
<div class="a" style="left:1008px;top:204px;width:330px;height:1px;background:#dadce0"></div>
<svg style="left:1302.5px;top:168.5px" width="11.0" height="11.0"><path d="M0 0L11.0 11.0M11.0 0L0 11.0" stroke="#444" stroke-width="1.5" fill="none"/></svg>
<div class="box" style="left:1026px;top:250px;width:295px;height:40px;border:1px solid #dadce0;border-radius:4px"></div>
<svg style="left:1291px;top:262px" width="18" height="16" viewBox="0 0 18 16"><path d="M1 1h16v14H1zM9 1v14M1 8h16" stroke="#80868b" stroke-width="2" fill="none"/></svg>
<div class="box" style="left:1026px;top:344px;width:295px;height:40px;border:1px solid #dadce0;border-radius:4px"></div>
<svg style="left:1294px;top:361px" width="9" height="5"><path d="M0 0h9L4.500 4.500z" fill="#444"/></svg>
<div class="box" style="left:1026px;top:401px;width:295px;height:40px;border:1px solid #dadce0;border-radius:4px"></div>
<div class="box" style="left:1027px;top:519px;width:20px;height:20px;border:2px solid #484d54;border-radius:2px"></div>
<div class="box" style="left:1028px;top:609px;width:22px;height:22px;border:1px solid #c4c7c5;border-radius:11px"></div>
<div class="box" style="left:1028px;top:646px;width:22px;height:22px;border:2px solid #12692f;border-radius:11px"></div>
<div class="a" style="left:1033px;top:651px;width:12px;height:12px;border-radius:6px;background:#12692f"></div>
<div class="a" style="left:1008px;top:832px;width:330px;height:1px;background:#dadce0"></div>
<div class="box" style="left:1058px;top:851px;width:147px;height:39px;border:1px solid #dadce0;border-radius:4px;background:#fff"></div>
<div class="a" style="left:1227px;top:851px;width:94px;height:39px;border-radius:4px;background:#2a8a49;box-shadow:0 1px 3px rgba(24,128,56,.35)"></div>
<svg style="left:1360px;top:163px" width="20" height="20" viewBox="0 0 20 20"><path d="M2 0h13.500v4.500H4.500v11H0V2a2 2 0 0 1 2-2z" fill="#4285f4"/><path d="M15.500 0H18a2 2 0 0 1 2 2v2.500h-4.500z" fill="#1967d2"/><path d="M15.500 4.500H20v11h-4.500z" fill="#fbbc04"/><path d="M0 15.500h4.500V20H2a2 2 0 0 1-2-2z" fill="#188038"/><path d="M4.500 15.500h11V20h-11z" fill="#34a853"/><path d="M15.500 15.500H20L15.500 20z" fill="#ea4335"/><rect x="4.500" y="4.500" width="11" height="11" fill="#fff"/></svg>
<svg style="left:1360px;top:224px" width="20" height="21" viewBox="0 0 20 21"><rect width="20" height="21" rx="2" fill="#fbbc04"/><path d="M10 4.500a3.800 3.800 0 0 1 2 7v1.500H8v-1.500a3.800 3.800 0 0 1 2-7z" fill="#fff"/><rect x="8" y="14" width="4" height="1.600" fill="#fff"/></svg>
<svg style="left:1360px;top:286px" width="20" height="20" viewBox="0 0 20 20"><circle cx="9.500" cy="10.800" r="7.300" stroke="#2a7bf4" stroke-width="3" fill="none"/><path d="M5.600 10.300l3 3L17 4.500" stroke="#2a7bf4" stroke-width="3" fill="none"/><circle cx="17.300" cy="3.300" r="2.200" fill="#1a62e0"/></svg>
<svg style="left:1361px;top:349px" width="18" height="18" viewBox="0 0 18 18"><path d="M0 17.500v-2.500c0-2.500 1.500-4.300 4-4.800h10c2.500.5 4 2.300 4 4.800v2.500z" fill="#8ab0f8"/><circle cx="9" cy="3.700" r="3.500" fill="#1550d4"/><path d="M2.300 17.500v-3.300C2.300 11 5 9.200 9 9.200s6.700 1.800 6.700 5v3.300z" fill="#1550d4"/></svg>
<svg style="left:1363.500px;top:410.500px" width="13.500" height="19" viewBox="0 0 14 20"><path d="M7 0a7 7 0 0 1 7 7c0 4-4.500 7.500-7 13C4.500 14.500 0 11 0 7a7 7 0 0 1 7-7z" fill="#34a853"/><path d="M1.500 2.700L7 7 1.300 11.200A7 7 0 0 1 1.500 2.700z" fill="#fbbc04"/><path d="M7 0a7 7 0 0 0-5.500 2.700L7 7 9.500 .5A7 7 0 0 0 7 0z" fill="#ea4335"/><path d="M9.500 .5A7 7 0 0 1 13.400 4.200L7 7z" fill="#4285f4"/><path d="M1.300 11.200L9 5l2 2.500-6.500 8z" fill="#fbbc04"/><path d="M13.400 4.200A7 7 0 0 1 14 7c0 1-.3 2-.8 3L7 7z" fill="#34a853"/><circle cx="7" cy="7" r="2.500" fill="#fff"/></svg>
<div class="a" style="left:1359px;top:468px;width:22px;height:1px;background:#dadce0"></div>
<svg style="left:1365px;top:916px" width="8" height="12"><path d="M1 1l5.500 5L1 11" stroke="#444" stroke-width="1.900" fill="none"/></svg>
<svg style="left:1362.500px;top:509.500px" width="15" height="15"><path d="M7.500 0v15M0 7.500h15" stroke="#111" stroke-width="1.800"/></svg>
<div class="a" style="left:0;top:953px;width:1400px;height:57px;background:#b9e2e6"></div>
<div class="a" style="left:0;top:953px;width:1400px;height:1px;background:#8fb5ba"></div>
<svg style="left:22px;top:973px" width="12" height="16" viewBox="0 0 12 16"><path d="M.500 .500h7.500l3.500 3.500v11.500H.500z" fill="#fff" stroke="#8c8c8c" stroke-width="1"/><path d="M8 .500v3.500h3.500" fill="#f4f4f4" stroke="#8c8c8c" stroke-width="1"/><rect x="3" y="6" width="6" height="6" fill="#1e96dc"/><path d="M3 9l2-1.500L9 10.500V12H3z" fill="#123f86"/><path d="M3 10.500h6V12H3z" fill="#06246e"/><circle cx="7.500" cy="7.500" r=".7" fill="#fff"/></svg>
<svg style="left:208px;top:979px" width="10" height="7"><path d="M1 6l4-4.500L9 6" stroke="#1f1f1f" stroke-width="1.700" fill="none"/></svg>
<div class="a" style="left:236px;top:960px;width:1px;height:44px;background:#7fa3a8"></div>
<svg style="left:255px;top:973px" width="12" height="16" viewBox="0 0 12 16"><path d="M.500 .500h7.500l3.500 3.500v11.500H.500z" fill="#fff" stroke="#8c8c8c" stroke-width="1"/><path d="M8 .500v3.500h3.500" fill="#f4f4f4" stroke="#8c8c8c" stroke-width="1"/><rect x="3" y="6" width="6" height="6" fill="#1e96dc"/><path d="M3 9l2-1.500L9 10.500V12H3z" fill="#123f86"/><path d="M3 10.500h6V12H3z" fill="#06246e"/><circle cx="7.500" cy="7.500" r=".7" fill="#fff"/></svg>
<svg style="left:441px;top:979px" width="10" height="7"><path d="M1 6l4-4.500L9 6" stroke="#1f1f1f" stroke-width="1.700" fill="none"/></svg>
<div class="a" style="left:469px;top:960px;width:1px;height:44px;background:#7fa3a8"></div>
<svg style="left:488px;top:973px" width="12" height="16" viewBox="0 0 12 16"><path d="M.500 .500h7.500l3.500 3.500v11.500H.500z" fill="#fff" stroke="#8c8c8c" stroke-width="1"/><path d="M8 .500v3.500h3.500" fill="#f4f4f4" stroke="#8c8c8c" stroke-width="1"/><rect x="3" y="6" width="6" height="6" fill="#1e96dc"/><path d="M3 9l2-1.500L9 10.500V12H3z" fill="#123f86"/><path d="M3 10.500h6V12H3z" fill="#06246e"/><circle cx="7.500" cy="7.500" r=".7" fill="#fff"/></svg>
<svg style="left:674px;top:979px" width="10" height="7"><path d="M1 6l4-4.500L9 6" stroke="#1f1f1f" stroke-width="1.700" fill="none"/></svg>
<div class="a" style="left:702px;top:960px;width:1px;height:44px;background:#7fa3a8"></div>
<svg style="left:721px;top:973px" width="12" height="16" viewBox="0 0 12 16"><path d="M.500 .500h7.500l3.500 3.500v11.500H.500z" fill="#fff" stroke="#8c8c8c" stroke-width="1"/><path d="M8 .500v3.500h3.500" fill="#f4f4f4" stroke="#8c8c8c" stroke-width="1"/><rect x="3" y="6" width="6" height="6" fill="#1e96dc"/><path d="M3 9l2-1.500L9 10.500V12H3z" fill="#123f86"/><path d="M3 10.500h6V12H3z" fill="#06246e"/><circle cx="7.500" cy="7.500" r=".7" fill="#fff"/></svg>
<svg style="left:907px;top:979px" width="10" height="7"><path d="M1 6l4-4.500L9 6" stroke="#1f1f1f" stroke-width="1.700" fill="none"/></svg>
<div class="a" style="left:935px;top:960px;width:1px;height:44px;background:#7fa3a8"></div>
<svg style="left:954px;top:973px" width="12" height="16" viewBox="0 0 12 16"><path d="M.500 .500h7.500l3.500 3.500v11.500H.500z" fill="#fff" stroke="#8c8c8c" stroke-width="1"/><path d="M8 .500v3.500h3.500" fill="#f4f4f4" stroke="#8c8c8c" stroke-width="1"/><rect x="3" y="6" width="6" height="6" fill="#1e96dc"/><path d="M3 9l2-1.500L9 10.500V12H3z" fill="#123f86"/><path d="M3 10.500h6V12H3z" fill="#06246e"/><circle cx="7.500" cy="7.500" r=".7" fill="#fff"/></svg>
<svg style="left:1140px;top:979px" width="10" height="7"><path d="M1 6l4-4.500L9 6" stroke="#1f1f1f" stroke-width="1.700" fill="none"/></svg>
<div class="a" style="left:1168px;top:960px;width:1px;height:44px;background:#7fa3a8"></div>
<div class="box" style="left:1286px;top:965px;width:78px;height:32px;border:1px solid #b3cfd3;border-radius:4px"></div>
<svg style="left:1377.5px;top:976.2px" width="9.0" height="9.0"><path d="M0 0L9.0 9.0M9.0 0L0 9.0" stroke="#1f1f1f" stroke-width="2" fill="none"/></svg>
<div class="a" style="left:0;top:1010px;width:1400px;height:40px;background:#101010"></div>
<svg style="left:16px;top:1022px" width="16" height="16" viewBox="0 0 16 16"><path d="M0 2.200L6.500 1.300v6.200H0zM7.300 1.200L16 0v7.500H7.300zM0 8.300h6.500v6.200L0 13.600zM7.300 8.300H16V16l-8.700-1.200z" fill="#fff"/></svg>
<div class="a" style="left:48px;top:1010px;width:288px;height:40px;background:#f3f3f3;border-top:1px solid #c8c8c8;border-bottom:1px solid #c8c8c8;box-sizing:border-box"></div>
<svg style="left:60px;top:1021px" width="17" height="17" viewBox="0 0 17 17"><circle cx="10.500" cy="6.500" r="5" stroke="#1f1f1f" stroke-width="1.300" fill="none"/><path d="M7 10.500L1 16.500" stroke="#1f1f1f" stroke-width="1.400"/></svg>
<div class="a" style="left:258px;top:1011px;width:78px;height:38px;overflow:hidden"><svg style="left:0;top:0" width="78" height="38" viewBox="258 1011 78 38"><defs><linearGradient id="sun" x1="0" y1="0" x2="1" y2="0"><stop offset="0" stop-color="#efb02a"/><stop offset="1" stop-color="#ffd640"/></linearGradient><clipPath id="gl"><circle cx="275" cy="1030" r="13.900"/></clipPath></defs><g clip-path="url(#gl)"><rect x="261" y="1016" width="14" height="28" fill="#4583b8"/><rect x="275" y="1016" width="14" height="28" fill="#7cc2ff"/><path d="M267 1021c2-2 5-3 8-3v26c-2-1-2-4-3-6s-4-2-5-5 2-5 3-6-3-2-3-6z" fill="#1f6a1c"/><path d="M275 1018c4-1 9 0 12 4 1 3 1 6-1 8-1-2-3-3-5-2s-3 3-2 5c-1 2-2 5-4 7z" fill="#4f9a1c"/><path d="M269 1019l3 1-2 2z" fill="#1f6a1c"/></g><path d="M275 1013v8M275 1043v5.500" stroke="#ff7f60" stroke-width="1.600"/><path d="M261.300 1031c3 5 22 6 27.400 -.5" stroke="#ff7f60" stroke-width="1.200" fill="none"/><path d="M296 1019h7.500M296 1030h7.500M296 1041h7.500" stroke="#8ea7c2" stroke-width="2.400"/><path d="M291 1019l5-3.300v6.600zM291 1030l5-3.300v6.600zM291 1041l5-3.300v6.600z" fill="#8ea7c2"/><circle cx="335.300" cy="1030" r="27.700" fill="#f08c1e" stroke="#f08c1e" stroke-width="2.400" stroke-dasharray="3.200 2.200"/><circle cx="335.300" cy="1030" r="27" fill="url(#sun)"/></svg></div>
<svg style="left:350.700px;top:1020.700px" width="24.500" height="18.500" viewBox="0 0 24.500 18.500"><defs><linearGradient id="wps" x1="0" y1="0" x2="0" y2="1"><stop offset="0" stop-color="#fa1f22"/><stop offset="1" stop-color="#f53a0c"/></linearGradient><linearGradient id="wps2" x1="0" y1="0" x2="0" y2="1"><stop offset="0" stop-color="#ff7a28"/><stop offset="1" stop-color="#ff5a0c"/></linearGradient></defs><path d="M0.14 0.14 L11.29 0.14 L10.29 4.00 L5.00 4.00 L8.57 10.86 L6.57 14.86 L0.14 1.14Z" fill="url(#wps)"/><path d="M18.00 0.14 L24.29 0.14 L24.14 1.71 L17.71 18.29 L15.43 18.29 L13.14 13.71 L14.86 10.29 L16.29 12.57 L19.43 4.00 L16.43 4.00Z" fill="url(#wps)"/><path d="M14.29 0.43 L18.00 0.43 L9.43 18.29 L6.86 18.29 L6.00 16.29Z" fill="url(#wps2)"/></svg>\n<svg style="left:400px;top:1017.500px" width="24" height="24" viewBox="0 0 24 24"><defs><linearGradient id="ff" x1="0.85" y1="0.1" x2="0.25" y2="0.95"><stop offset="0" stop-color="#fff04a"/><stop offset="0.35" stop-color="#ffbd2e"/><stop offset="0.6" stop-color="#ff7a1f"/><stop offset="0.82" stop-color="#ff3b47"/><stop offset="1" stop-color="#e5178a"/></linearGradient><radialGradient id="ffp" cx="0.55" cy="0.35" r="0.7"><stop offset="0" stop-color="#9a5cff"/><stop offset="1" stop-color="#5a55c8"/></radialGradient></defs><path d="M14.800 .3c.8 1.800 2 2.800 3.300 3.800 1 .2 1.300 1 1.900 1.500 1.600 1.800 2.700 4.200 2.700 6.900A11.200 11.200 0 0 1 .3 12.500c0-2.600.8-5.300 2.600-7.500.3-.6.800-1 1.200-1.300l.9 2 1.300-1.800.8 2.300c1.300.3 2.400.8 3.200 1.500C10.500 5 12.800 3 14.800 .3z" fill="url(#ff)"/><circle cx="11.700" cy="12.200" r="4.900" fill="url(#ffp)"/><path d="M9 7.500c2-1.300 4.500-.9 6 0-1.200 0-2 .3-2.500.9z" fill="#b833e1"/><path d="M3.500 9.500c2.500-1 5.500-.5 7.500 1-1.200.3-2.500 1-3 1.800-.6 1-.6 2.300 0 3.500-1.800-.8-3.300-2.500-4.500-6.300z" fill="#ff9a1f"/><path d="M4 10.200c2-.6 4.800-.3 6.800 .8-1.300.2-2.500.5-3.300.8-1.200.3-2.500-.4-3.500-1.600z" fill="#ffb91f"/><path d="M16.500 8c2 2 2.800 5 1.500 8 .3-2.500-.3-5-1.500-8z" fill="#ffd23a" opacity=".7"/></svg>
<svg style="left:449.500px;top:1018.500px" width="22.500" height="22.500" viewBox="0 0 22.500 22.500"><rect x="10" y="2.500" width="12.500" height="17.500" fill="#fff"/><path d="M12.500 5h8.500M12.500 7.500h8.500M12.500 10h8.500M12.500 12.500h8.500M12.500 15h8.500M12.500 17.500h8.500" stroke="#5a7fbf" stroke-width="1.300"/><path d="M0 2.500L13.500 0v22.500L0 20z" fill="#2b579a"/><path d="M2.500 7.500h1.800l1 5.200 1.300-5.200h1.300l1.300 5.200 1-5.200H12l-1.900 7.800H8.800L7.300 9.800 5.700 15.300H4.400z" fill="#fff"/></svg>
<svg style="left:498.500px;top:1018.500px" width="22.500" height="22.500" viewBox="0 0 22.500 22.500"><rect x="5.500" y="0" width="17" height="13.500" rx="2" fill="#5bb974"/><path d="M2 4.800h13a2 2 0 0 1 2 2V16a2 2 0 0 1-2 2H5l-4.500 4.500c-.2.200-.5 0-.5-.2V6.800a2 2 0 0 1 2-2z" fill="#00ac47"/><path d="M5.500 4.800H15a2 2 0 0 1 2 2v6.700H7.500a2 2 0 0 1-2-2z" fill="#00832d"/></svg>
<svg style="left:548px;top:1020.500px" width="22" height="18.500" viewBox="0 0 22 18.500"><path d="M0 1.500A1.500 1.500 0 0 1 1.500 0h7l1 1.500V4H0z" fill="#e8a317"/><path d="M0 2.500h22v15H0z" fill="#fcd462"/><path d="M0 16.800h22v.7H0z" fill="#e0b040"/><path d="M4 10.500h13.500v8h-3v-4.500h-7.500v4.500H4z" fill="#3a96dd"/></svg>
<div class="a" style="left:633px;top:1010px;width:48px;height:40px;background:#343434"></div>
<svg style="left:596px;top:1018px" width="24" height="24" viewBox="0 0 24 24"><circle cx="12" cy="12" r="12" fill="#fff"/><path d="M12 0a12 12 0 0 1 10.400 6H12a6 6 0 0 0-5.200 3L1.600 6A12 12 0 0 1 12 0z" fill="#ea4335"/><path d="M22.400 6A12 12 0 0 1 12 24l5.200-9a6 6 0 0 0 0-6z" fill="#fbbc04"/><path d="M1.600 6l5.200 9a6 6 0 0 0 5.200 3l-5.200 4.800A12 12 0 0 1 1.600 6z" fill="#34a853"/><path d="M6.800 15a6 6 0 0 0 10.400 0L12 24A12 12 0 0 1 3 20z" fill="#34a853"/><circle cx="12" cy="12" r="5.400" fill="#fff"/><circle cx="12" cy="12" r="4.300" fill="#4285f4"/></svg>
<svg style="left:644px;top:1018px" width="24" height="24" viewBox="0 0 24 24"><circle cx="12" cy="12" r="12" fill="#fff"/><path d="M12 0a12 12 0 0 1 10.400 6H12a6 6 0 0 0-5.200 3L1.600 6A12 12 0 0 1 12 0z" fill="#ea4335"/><path d="M22.400 6A12 12 0 0 1 12 24l5.200-9a6 6 0 0 0 0-6z" fill="#fbbc04"/><path d="M1.600 6l5.200 9a6 6 0 0 0 5.200 3l-5.200 4.800A12 12 0 0 1 1.600 6z" fill="#34a853"/><path d="M6.800 15a6 6 0 0 0 10.400 0L12 24A12 12 0 0 1 3 20z" fill="#34a853"/><circle cx="12" cy="12" r="5.400" fill="#fff"/><circle cx="12" cy="12" r="4.300" fill="#4285f4"/></svg>
<div class="a" style="left:392px;top:1048px;width:40px;height:2px;background:#7cc5f2"></div>
<div class="a" style="left:441px;top:1048px;width:40px;height:2px;background:#7cc5f2"></div>
<div class="a" style="left:490px;top:1048px;width:40px;height:2px;background:#7cc5f2"></div>
<div class="a" style="left:633px;top:1048px;width:48px;height:2px;background:#7cc5f2"></div>
<svg style="left:1017px;top:1019px" width="26" height="21" viewBox="0 0 26 21"><circle cx="17" cy="7" r="6" fill="#f7a823"/><path d="M6 20.500a5 5 0 0 1-.5-10 6.500 6.500 0 0 1 12-1 5.600 5.600 0 0 1 2 11z" fill="#dfe7f5"/><path d="M6 20.500a5 5 0 0 1-1-9.800c3 4 9 6 17 5a5.600 5.600 0 0 1-2.500 4.800z" fill="#b8c8e8"/></svg>
<svg style="left:1198px;top:1026px" width="13" height="8"><path d="M1 7l5.500-5.500L12 7" stroke="#fff" stroke-width="1.300" fill="none"/></svg>
<svg style="left:1221px;top:1022px" width="17" height="16" viewBox="0 0 17 16"><path d="M.700 5.500h3L7.500 2v12L3.700 10.500h-3z" stroke="#fff" stroke-width="1.100" fill="none" stroke-linejoin="round"/><path d="M10 5.500a3.500 3.500 0 0 1 0 5M12.200 3.500a6.500 6.500 0 0 1 0 9M14.500 1.500a9.500 9.500 0 0 1 0 13" stroke="#fff" stroke-width="1.100" fill="none"/></svg>
<svg style="left:1359.500px;top:1022.500px" width="15.500" height="16" viewBox="0 0 17 17"><path d="M.600 .600h15.800v11.800h-4.400l-3 3.600v-3.600H.600z" stroke="#fff" stroke-width="1.200" fill="none"/></svg>
<div class="a" style="left:1395px;top:1010px;width:1px;height:40px;background:#555"></div>
<span class="t" style="left:44px;top:10.1px;font-size:12px;line-height:14.4px;color:#1c2b2e;letter-spacing:-0.338px;">Clean Google S</span>
<span class="t" style="left:185px;top:10.1px;font-size:12px;line-height:14.4px;color:#1c2b2e;letter-spacing:-0.170px;">Top 10 tips to c</span>
<span class="t" style="left:326px;top:10.1px;font-size:12px;line-height:14.4px;color:#1c2b2e;letter-spacing:-0.070px;">Inbox (444) - a</span>
<span class="t" style="left:466px;top:10.1px;font-size:12px;line-height:14.4px;color:#1c2b2e;letter-spacing:-0.265px;">Posts ‹ Navo H</span>
<span class="t" style="left:606px;top:10.1px;font-size:12px;line-height:14.4px;color:#1c2b2e;letter-spacing:-0.203px;">Edit Post “Clea</span>
<span class="t" style="left:746px;top:10.1px;font-size:12px;line-height:14.4px;color:#1c2b2e;letter-spacing:-0.261px;">Google Sheets</span>
<span class="t" style="left:886px;top:10.1px;font-size:12px;line-height:14.4px;color:#1c2b2e;letter-spacing:0.030px;">- Grammarly</span>
<span class="t" style="left:1026px;top:10.1px;font-size:12px;line-height:14.4px;color:#1c2b2e;letter-spacing:0.211px;">Untitled sprea</span>
<span class="t" style="left:142px;top:43.6px;font-size:14px;line-height:16.8px;color:#5f6368;letter-spacing:-0.087px;"><span style="color:#202124">docs.google.com</span>/spreadsheets/d/1UWGMcmI0GYuNaoIBV1I_iPjrkF0PaqvHyMOlxf4Fvgk/edit#gid=0</span>
<span class="t" style="left:1341.5px;top:45.3px;font-size:12px;line-height:14.4px;color:#fff;">A</span>
<span class="t" style="left:79px;top:82.8px;font-size:20px;line-height:24.0px;color:#7a7a7a;letter-spacing:0.077px;">Untitled spreadsheet</span>
<span class="t" style="left:377px;top:86.7px;font-size:13px;line-height:15.6px;color:#5f6368;letter-spacing:-0.019px;-webkit-text-stroke:.35px #5f6368;">Saved to Drive</span>
<span class="t" style="left:78.5px;top:116.0px;font-size:15px;line-height:18.0px;color:#202124;letter-spacing:0.082px;">File</span>
<span class="t" style="left:118px;top:116.0px;font-size:15px;line-height:18.0px;color:#202124;letter-spacing:0.285px;">Edit</span>
<span class="t" style="left:160px;top:116.0px;font-size:15px;line-height:18.0px;color:#202124;letter-spacing:0.438px;">View</span>
<span class="t" style="left:210px;top:116.0px;font-size:15px;line-height:18.0px;color:#202124;letter-spacing:0.414px;">Insert</span>
<span class="t" style="left:265px;top:116.0px;font-size:15px;line-height:18.0px;color:#202124;letter-spacing:0.581px;">Format</span>
<span class="t" style="left:331px;top:116.0px;font-size:15px;line-height:18.0px;color:#202124;letter-spacing:0.078px;">Data</span>
<span class="t" style="left:379px;top:116.0px;font-size:15px;line-height:18.0px;color:#202124;letter-spacing:0.794px;">Tools</span>
<span class="t" style="left:433px;top:116.0px;font-size:15px;line-height:18.0px;color:#202124;letter-spacing:0.362px;">Extensions</span>
<span class="t" style="left:526px;top:116.0px;font-size:15px;line-height:18.0px;color:#202124;letter-spacing:0.410px;">Help</span>
<span class="t" style="left:581px;top:116.0px;font-size:15px;line-height:18.0px;color:#5f6368;letter-spacing:0.209px;text-decoration:underline;text-underline-offset:2px;">Last edit was seconds ago</span>
<span class="t" style="left:1258px;top:96.4px;font-size:16px;line-height:19.2px;color:#fff;font-weight:700;letter-spacing:-0.094px;">Share</span>
<span class="t" style="left:1354.3px;top:95.9px;font-size:18.5px;line-height:22.2px;color:#fff;-webkit-text-stroke:.4px #fff;">A</span>
<span class="t" style="left:177px;top:155.9px;font-size:13px;line-height:15.6px;color:#444746;letter-spacing:-0.312px;">100%</span>
<span class="t" style="left:258px;top:155.3px;font-size:14px;line-height:16.8px;color:#444746;">$</span>
<span class="t" style="left:287.2px;top:156.2px;font-size:12.5px;line-height:15.0px;color:#444746;">%</span>
<span class="t" style="left:313.5px;top:155.1px;font-size:14px;line-height:16.8px;color:#444746;">.0</span>
<span class="t" style="left:341.5px;top:155.1px;font-size:14px;line-height:16.8px;color:#444746;letter-spacing:0.177px;">.00</span>
<span class="t" style="left:372px;top:156.2px;font-size:13.5px;line-height:16.2px;color:#444746;letter-spacing:0.156px;">123</span>
<span class="t" style="left:433px;top:155.9px;font-size:13.5px;line-height:16.2px;color:#444746;letter-spacing:0.015px;">Default (Ari...</span>
<span class="t" style="left:558px;top:155.9px;font-size:13.5px;line-height:16.2px;color:#444746;letter-spacing:-0.516px;">10</span>
<span class="t" style="left:635px;top:154.1px;font-size:17px;line-height:20.4px;color:#5b5e62;font-weight:700;">B</span>
<span class="t" style="left:668px;top:152.9px;font-size:19px;line-height:22.8px;color:#5b5e62;font-style:italic;font-family:'Liberation Serif',serif;font-weight:700;">I</span>
<span class="t" style="left:696.5px;top:154.1px;font-size:17px;line-height:20.4px;color:#5b5e62;-webkit-text-stroke:.4px #5b5e62;">S</span>
<span class="t" style="left:727.8px;top:151.8px;font-size:17.5px;line-height:21.0px;color:#5b5e62;-webkit-text-stroke:.3px #5b5e62;">A</span>
<span class="t" style="left:9px;top:189.6px;font-size:14px;line-height:16.8px;color:#202124;">A1</span>
<span class="t" style="left:127px;top:182.7px;font-size:23px;line-height:27.6px;color:#c4c7c9;font-style:italic;font-family:'Liberation Serif',serif;">fx</span>
<span class="t" style="left:101.9px;top:217.5px;font-size:12px;line-height:14.4px;color:#4d4d4d;">A</span>
<span class="t" style="left:212.9px;top:217.5px;font-size:12px;line-height:14.4px;color:#4d4d4d;">B</span>
<span class="t" style="left:323.9px;top:217.5px;font-size:12px;line-height:14.4px;color:#4d4d4d;">C</span>
<span class="t" style="left:434.9px;top:217.5px;font-size:12px;line-height:14.4px;color:#4d4d4d;">D</span>
<span class="t" style="left:545.9px;top:217.5px;font-size:12px;line-height:14.4px;color:#4d4d4d;">E</span>
<span class="t" style="left:656.9px;top:217.5px;font-size:12px;line-height:14.4px;color:#4d4d4d;">F</span>
<span class="t" style="left:767.9px;top:217.5px;font-size:12px;line-height:14.4px;color:#4d4d4d;">G</span>
<span class="t" style="left:878.9px;top:217.5px;font-size:12px;line-height:14.4px;color:#4d4d4d;">H</span>
<span class="t" style="left:992.3px;top:217.5px;font-size:12px;line-height:14.4px;color:#4d4d4d;">I</span>
<span class="t" style="left:21.6px;top:241.1px;font-size:11.8px;line-height:14.2px;color:#50545a;">1</span>
<span class="t" style="left:21.6px;top:264.1px;font-size:11.8px;line-height:14.2px;color:#50545a;">2</span>
<span class="t" style="left:21.6px;top:287.1px;font-size:11.8px;line-height:14.2px;color:#50545a;">3</span>
<span class="t" style="left:21.6px;top:310.1px;font-size:11.8px;line-height:14.2px;color:#50545a;">4</span>
<span class="t" style="left:21.6px;top:333.1px;font-size:11.8px;line-height:14.2px;color:#50545a;">5</span>
<span class="t" style="left:21.6px;top:356.1px;font-size:11.8px;line-height:14.2px;color:#50545a;">6</span>
<span class="t" style="left:21.6px;top:379.1px;font-size:11.8px;line-height:14.2px;color:#50545a;">7</span>
<span class="t" style="left:21.6px;top:402.1px;font-size:11.8px;line-height:14.2px;color:#50545a;">8</span>
<span class="t" style="left:21.6px;top:425.1px;font-size:11.8px;line-height:14.2px;color:#50545a;">9</span>
<span class="t" style="left:18.3px;top:448.1px;font-size:11.8px;line-height:14.2px;color:#50545a;">10</span>
<span class="t" style="left:18.3px;top:471.1px;font-size:11.8px;line-height:14.2px;color:#50545a;">11</span>
<span class="t" style="left:18.3px;top:494.1px;font-size:11.8px;line-height:14.2px;color:#50545a;">12</span>
<span class="t" style="left:18.3px;top:517.1px;font-size:11.8px;line-height:14.2px;color:#50545a;">13</span>
<span class="t" style="left:18.3px;top:540.1px;font-size:11.8px;line-height:14.2px;color:#50545a;">14</span>
<span class="t" style="left:18.3px;top:563.1px;font-size:11.8px;line-height:14.2px;color:#50545a;">15</span>
<span class="t" style="left:18.3px;top:586.1px;font-size:11.8px;line-height:14.2px;color:#50545a;">16</span>
<span class="t" style="left:18.3px;top:609.1px;font-size:11.8px;line-height:14.2px;color:#50545a;">17</span>
<span class="t" style="left:18.3px;top:632.1px;font-size:11.8px;line-height:14.2px;color:#50545a;">18</span>
<span class="t" style="left:18.3px;top:655.1px;font-size:11.8px;line-height:14.2px;color:#50545a;">19</span>
<span class="t" style="left:18.3px;top:678.1px;font-size:11.8px;line-height:14.2px;color:#50545a;">20</span>
<span class="t" style="left:18.3px;top:701.1px;font-size:11.8px;line-height:14.2px;color:#50545a;">21</span>
<span class="t" style="left:18.3px;top:724.1px;font-size:11.8px;line-height:14.2px;color:#50545a;">22</span>
<span class="t" style="left:18.3px;top:747.1px;font-size:11.8px;line-height:14.2px;color:#50545a;">23</span>
<span class="t" style="left:18.3px;top:770.1px;font-size:11.8px;line-height:14.2px;color:#50545a;">24</span>
<span class="t" style="left:18.3px;top:793.1px;font-size:11.8px;line-height:14.2px;color:#50545a;">25</span>
<span class="t" style="left:18.3px;top:816.1px;font-size:11.8px;line-height:14.2px;color:#50545a;">26</span>
<span class="t" style="left:18.3px;top:839.1px;font-size:11.8px;line-height:14.2px;color:#50545a;">27</span>
<span class="t" style="left:18.3px;top:862.1px;font-size:11.8px;line-height:14.2px;color:#50545a;">28</span>
<span class="t" style="left:18.3px;top:885.1px;font-size:11.8px;line-height:14.2px;color:#50545a;">29</span>
<span class="t" style="left:145px;top:921.2px;font-size:16px;line-height:19.2px;color:#188038;letter-spacing:0.214px;-webkit-text-stroke:.3px #188038;">Sheet1</span>
<span class="t" style="left:1026px;top:162.9px;font-size:18px;line-height:21.6px;color:#202124;letter-spacing:0.329px;">Data validation rules</span>
<span class="t" style="left:1026px;top:223.7px;font-size:16px;line-height:19.2px;color:#3c4043;letter-spacing:0.201px;">Apply to range</span>
<span class="t" style="left:1037px;top:262.1px;font-size:14.8px;line-height:17.8px;color:#585c61;letter-spacing:-0.012px;">Sheet1!A1</span>
<span class="t" style="left:1026px;top:316.4px;font-size:16px;line-height:19.2px;color:#3c4043;letter-spacing:0.305px;">Criteria</span>
<span class="t" style="left:1036px;top:354.0px;font-size:16px;line-height:19.2px;color:#3c4043;letter-spacing:0.124px;">Text contains</span>
<span class="t" style="left:1036px;top:413.6px;font-size:14px;line-height:16.8px;color:#5f6368;">@</span>
<span class="t" style="left:1054px;top:479.1px;font-size:16px;line-height:19.2px;color:#188038;letter-spacing:0.487px;-webkit-text-stroke:.25px #188038;">Advanced options</span>
<span class="t" style="left:1061px;top:521.0px;font-size:15px;line-height:18.0px;color:#3c4043;letter-spacing:0.168px;">Show help text for a selected cell</span>
<span class="t" style="left:1026px;top:577.4px;font-size:16px;line-height:19.2px;color:#3c4043;letter-spacing:0.199px;">If the data is invalid:</span>
<span class="t" style="left:1063px;top:611.0px;font-size:15px;line-height:18.0px;color:#3c4043;letter-spacing:0.305px;">Show a warning</span>
<span class="t" style="left:1063px;top:648.0px;font-size:15px;line-height:18.0px;color:#3c4043;letter-spacing:0.360px;">Reject the input</span>
<span class="t" style="left:1085px;top:861.1px;font-size:16px;line-height:19.2px;color:#188038;letter-spacing:0.209px;-webkit-text-stroke:.3px #188038;">Remove rule</span>
<span class="t" style="left:1254px;top:860.8px;font-size:16.5px;line-height:19.8px;color:#fff;font-weight:700;letter-spacing:-0.438px;">Done</span>
<span class="t" style="left:1365.2px;top:167.5px;font-size:9.5px;line-height:11.4px;color:#4a86f0;letter-spacing:-.6px;">31</span>
<span class="t" style="left:49.5px;top:974.7px;font-size:13px;line-height:15.6px;color:#1f2d30;letter-spacing:-0.097px;">11 (3).jpg</span>
<span class="t" style="left:282.5px;top:974.7px;font-size:13px;line-height:15.6px;color:#1f2d30;letter-spacing:-0.192px;">12 (1).jpg</span>
<span class="t" style="left:515.5px;top:974.7px;font-size:13px;line-height:15.6px;color:#1f2d30;letter-spacing:-0.192px;">10 (7).jpg</span>
<span class="t" style="left:748.5px;top:974.7px;font-size:13px;line-height:15.6px;color:#1f2d30;letter-spacing:-0.196px;">09 (13).jpg</span>
<span class="t" style="left:981.5px;top:974.7px;font-size:13px;line-height:15.6px;color:#1f2d30;letter-spacing:-0.196px;">08 (18).jpg</span>
<span class="t" style="left:1302px;top:973.9px;font-size:12.5px;line-height:15.0px;color:#1a5fc4;letter-spacing:-0.156px;">Show all</span>
<span class="t" style="left:88.3px;top:1021.3px;font-size:15px;line-height:18.0px;color:#2b2b2b;letter-spacing:-0.241px;">Type here to search</span>
<span class="t" style="left:1050px;top:1021.1px;font-size:14.3px;line-height:17.2px;color:#fff;letter-spacing:-0.738px;">35°C</span>
<span class="t" style="left:1088px;top:1020.7px;font-size:15px;line-height:18.0px;color:#fff;letter-spacing:-0.298px;">Mostly cloudy</span>
<span class="t" style="left:1247px;top:1023.1px;font-size:11.5px;line-height:13.8px;color:#fff;letter-spacing:-0.641px;">ENG</span>
<span class="t" style="left:1288px;top:1013.8px;font-size:12px;line-height:14.4px;color:#fff;letter-spacing:-0.422px;">05:18 PM</span>
<span class="t" style="left:1283px;top:1032.3px;font-size:12px;line-height:14.4px;color:#fff;letter-spacing:-0.339px;">21-03-2023</span>
</body></html>
